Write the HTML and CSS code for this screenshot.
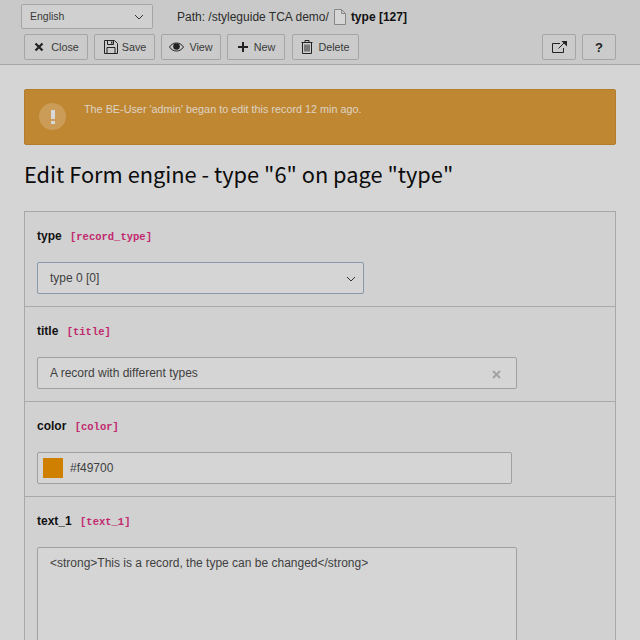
FILE: index.html
```html
<!DOCTYPE html>
<html lang="en">
<head>
<meta charset="utf-8">
<title>Edit Form engine</title>
<link rel="stylesheet" href="styles.css">
</head>
<body>
<header class="docheader">
  <div class="row-top">
    <div class="lang"><span>English</span>
      <svg class="chev" width="10" height="6" viewBox="0 0 10 6"><path d="M1 1l4 4 4-4" fill="none" stroke="#333"/></svg>
    </div>
    <div class="path">Path: /styleguide TCA demo/
      <svg class="file" width="12" height="16" viewBox="0 0 12 16"><path d="M.5.5h7l4 4v11H.5z M7.500.5v4h4" fill="#d6d6d6" stroke="#888"/></svg>
      <b>type [127]</b></div>
  </div>
  <div class="row-btns">
    <div class="btn b-close"><svg width="12" height="12" viewBox="0 0 12 12"><path d="M2.500 2.500l7 7M9.500 2.500l-7 7" stroke="#222" stroke-width="2.200" fill="none"/></svg>Close</div>
    <div class="btn b-save"><svg width="14" height="14" viewBox="0 0 14 14"><path d="M.5.5h10l3 3v10H.5z M3.500.5v4h6v-4 M3 13.500v-6h8v6" fill="none" stroke="#222"/><path d="M7 1.500h1.500v2H7z" fill="#222"/></svg>Save</div>
    <div class="btn b-view"><svg width="15" height="12" viewBox="0 0 15 12"><path d="M.5 6C2.500 3 5 2 7.500 2s5 1 7 4c-2 3-4.500 4-7 4s-5-1-7-4z" fill="none" stroke="#222"/><circle cx="7.500" cy="5.500" r="3.300" fill="#222"/></svg>View</div>
    <div class="btn b-new"><svg width="12" height="12" viewBox="0 0 12 12"><path d="M6 1v10M1 6h10" stroke="#222" stroke-width="2" fill="none"/></svg>New</div>
    <div class="btn b-del"><svg width="12" height="14" viewBox="0 0 12 14"><path d="M.5 2.500h11M4 2.500V.5h4v2M1.500 2.500v11h9v-11M4 4.500v7M6 4.500v7M8 4.500v7" fill="none" stroke="#222"/></svg>Delete</div>
    <div class="spacer"></div>
    <div class="btn b-icon"><svg width="15" height="12" viewBox="0 0 15 12"><path d="M8 2.500H.5v9h11V7" fill="none" stroke="#222"/><path d="M6.500 7.500L12.500 1.500" stroke="#222" fill="none"/><path d="M9.500 0H15v5.500z" fill="#222"/></svg></div>
    <div class="btn b-icon b-help">?</div>
  </div>
</header>
<main class="content">
  <div class="alert">
    <div class="alert-icon"><span class="bang"></span><span class="dot"></span></div>
    <p>The BE-User 'admin' began to edit this record 12 min ago.</p>
  </div>
  <h1>Edit Form engine - type "6" on page "type"</h1>
  <section class="panel">
    <div class="item">
      <label class="lbl">type <code>[record_type]</code></label>
      <div class="field f-select">type 0 [0]
        <svg class="chev" width="10" height="6" viewBox="0 0 10 6"><path d="M1 1l4 4 4-4" fill="none" stroke="#333"/></svg>
      </div>
    </div>
    <div class="item">
      <label class="lbl">title <code>[title]</code></label>
      <div class="field f-title">A record with different types
        <svg class="clear" width="9" height="9" viewBox="0 0 9 9"><path d="M1 1l7 7M8 1l-7 7" stroke="#a3a3a3" stroke-width="2" fill="none"/></svg>
      </div>
    </div>
    <div class="item">
      <label class="lbl">color <code>[color]</code></label>
      <div class="field f-color"><span class="swatch"></span>#f49700</div>
    </div>
    <div class="item item-last">
      <label class="lbl">text_1 <code>[text_1]</code></label>
      <div class="field f-text">&lt;strong&gt;This is a record, the type can be changed&lt;/strong&gt;</div>
    </div>
  </section>
</main>
</body>
</html>
```
FILE: styles.css
```css
* { box-sizing: border-box; }
body {
  margin: 0;
  height: 640px;
  overflow: hidden;
  background: #d5d5d5;
  font-family: "Liberation Sans", Arial, sans-serif;
  font-size: 12px;
  color: #000;
}
.docheader {
  height: 65px;
  background: #c9c9c9;
  border-bottom: 1px solid #a6a6a6;
  padding: 4px 24px 0 21px;
}
.row-top { display: flex; align-items: center; height: 25px; }
.lang {
  width: 132px;
  height: 25px;
  border: 1px solid #a5a5a5;
  border-radius: 2px;
  background: #d0d0d0;
  padding: 0 8px;
  display: flex;
  align-items: center;
  justify-content: space-between;
  font-size: 10.5px;
  color: #3a3a3a;
}
.lang span { position: relative; top: -1px; }
.path {
  margin-left: 24px;
  display: flex;
  align-items: center;
  gap: 5px;
  white-space: nowrap;
  color: #2c2c2c;
}
.path b { color: #111; }
.row-btns { display: flex; align-items: center; gap: 6px; margin-top: 5px; padding-left: 3px; height: 26px; }
.spacer { flex: 1; }
.btn {
  height: 26px;
  border: 1px solid #a5a5a5;
  border-radius: 2px;
  background: #cbcbcb;
  display: flex;
  align-items: center;
  justify-content: center;
  gap: 5px;
  font-size: 10.8px;
  color: #3a3a3a;
  flex: none;
}
.b-close { width: 64px; gap: 6px; }
.b-save { width: 61px; gap: 4px; padding-left: 1px; }
.b-view { width: 60px; }
.b-new { width: 58px; }
.b-del { width: 67px; margin-left: 1px; }
.b-icon { width: 34px; }
.b-help { font-weight: bold; font-size: 13px; color: #222; }
.content { height: 575px; overflow: hidden; padding: 24px 24px 0; }
.alert {
  height: 56px;
  background: #c08733;
  border: 1px solid #b37d2e;
  border-radius: 2px;
  display: flex;
  padding: 13px 14px;
  gap: 18px;
}
.alert-icon {
  width: 27px;
  height: 27px;
  border-radius: 50%;
  background: #cb9c57;
  display: flex;
  flex-direction: column;
  align-items: center;
  justify-content: center;
  gap: 2px;
  flex: none;
}
.bang { width: 4px; height: 9px; background: #d8d8d8; }
.dot { width: 4px; height: 3px; background: #d8d8d8; }
.alert p { margin: -1px 0 0; font-size: 10.82px; line-height: 14px; color: #dcd3c4; }
h1 {
  margin: 13px 0 0;
  font-family: "Noto Sans CJK SC", "Noto Sans", sans-serif;
  font-weight: 400;
  font-size: 21.8px;
  line-height: 32px;
  color: #0c0c0c;
  height: 53px;
}
.panel {
  border: 1px solid #a8a8a8;
  border-bottom: 0;
  background: #d1d1d1;
}
.item {
  height: 95px;
  padding: 0 12px;
  border-bottom: 1px solid #a8a8a8;
  display: flex;
  flex-direction: column;
}
.item-last { height: 200px; border-bottom: 0; }
.lbl {
  height: 50px;
  flex: none;
  padding-top: 16px;
  font-weight: bold;
  font-size: 12px;
  line-height: 16px;
  color: #111;
  white-space: nowrap;
}
.lbl code {
  font-family: "Liberation Mono", monospace;
  font-size: 10.5px;
  font-weight: bold;
  color: #c1296e;
  margin-left: 5px;
}
.field {
  position: relative;
  height: 32px;
  border: 1px solid #a0a0a0;
  border-radius: 2px;
  background: #d5d5d5;
  padding-left: 12px;
  display: flex;
  align-items: center;
  color: #3f3f3f;
  flex: none;
}
.f-select { width: 327px; border-color: #8799aa; }
.f-select .chev { position: absolute; right: 7px; top: 13px; }
.f-title { width: 480px; }
.clear { position: absolute; right: 15px; top: 12px; }
.f-color { width: 475px; padding-left: 5px; }
.swatch { width: 20px; height: 20px; background: #cf8000; margin-right: 7px; }
.f-text { width: 480px; height: 140px; align-items: flex-start; padding-top: 7px; line-height: 16px; }
```
